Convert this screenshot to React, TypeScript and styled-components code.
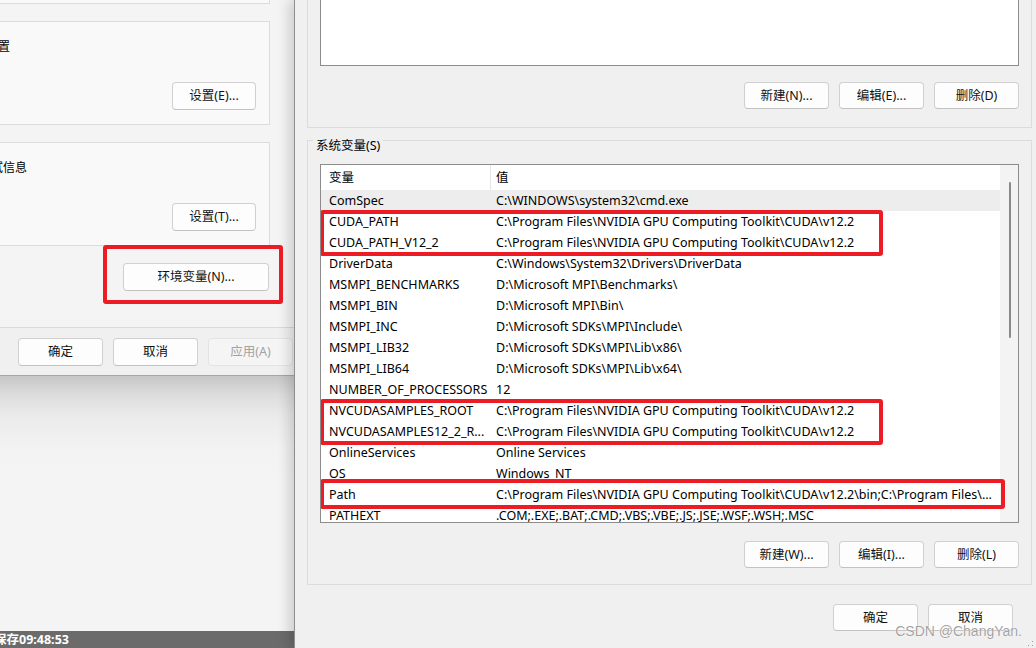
import React from "react";
import styled, { createGlobalStyle } from "styled-components";

const GlobalStyle = createGlobalStyle`
  html, body { margin: 0; padding: 0; }
  body {
    width: 1036px;
    height: 648px;
    overflow: hidden;
    background: #f4f4f4;
    font-family: "Noto Sans", "Noto Sans CJK SC", sans-serif;
    font-size: 12px;
    color: #000;
  }
  * { box-sizing: border-box; }
`;

const Screen = styled.div`
  display: flex;
  width: 1036px;
  height: 648px;
  overflow: hidden;
`;

/* ---------- left: System Properties dialog + desktop ---------- */

const LeftColumn = styled.div`
  width: 294px;
  flex: none;
  display: flex;
  flex-direction: column;
  overflow: hidden;
`;

const SysDialog = styled.div`
  height: 376px;
  flex: none;
  display: flex;
  flex-direction: column;
  overflow: hidden;
  background: #f0f0f0;
  border-bottom: 1px solid #a6a6a6;
`;

const TabPage = styled.div`
  flex: 1;
  width: 454px;
  margin-left: -160px;
  padding: 0 24px 0 12px;
  display: flex;
  flex-direction: column;
  gap: 17px;
  background: #f4f4f4;
  border-bottom: 1px solid #dadada;
`;

const Card = styled.div<{ $first?: boolean }>`
  height: 104px;
  flex: none;
  margin-top: ${(p) => (p.$first ? "-100px" : "0")};
  border: 1px solid #dcdcdc;
  background: #f9f9f9;
  padding: 0 13px 14px 13px;
  display: flex;
  flex-direction: column;
`;

const CardLegend = styled.div`
  align-self: flex-start;
  margin: -9px 0 0 -4px;
  padding: 0 3px;
  line-height: 16px;
  background: #f4f4f4;
`;

const CardDesc = styled.div<{ $shift?: number }>`
  margin-top: 10px;
  margin-left: ${(p) => p.$shift ?? 0}px;
  line-height: 16px;
  white-space: nowrap;
`;

const ButtonRow = styled.div<{ $gap?: number; $top?: number }>`
  display: flex;
  justify-content: flex-end;
  gap: ${(p) => p.$gap ?? 10}px;
  margin-top: ${(p) => (p.$top !== undefined ? `${p.$top}px` : "auto")};
`;

const Btn = styled.button<{ $w: number; $h?: number }>`
  width: ${(p) => p.$w}px;
  height: ${(p) => p.$h ?? 28}px;
  flex: none;
  padding: 0;
  border: 1px solid #d0d0d0;
  border-bottom-color: #c2c2c2;
  border-radius: 4px;
  background: #fdfdfd;
  color: #111;
  font-family: "Noto Sans", "Noto Sans CJK SC", sans-serif;
  font-size: 12.5px;
  line-height: 16px;
  white-space: nowrap;
  &:disabled {
    background: #f5f5f5;
    border-color: #e3e3e3;
    color: #a3a3a3;
  }
`;

const RedFrame = styled.div`
  align-self: flex-end;
  margin: -18px -13px 0 0;
  border: 4px solid #ed1c24;
  border-radius: 3px;
  padding: 14px 10px 9px 16px;
`;

const DialogFooter = styled.div`
  height: 47px;
  flex: none;
  width: 454px;
  margin-left: -160px;
  padding: 10px 1px 0 0;
  display: flex;
  justify-content: flex-end;
  align-items: flex-start;
  gap: 10px;
`;

const Desktop = styled.div`
  flex: 1;
  background: linear-gradient(
    to bottom,
    #c6c6c6 0px,
    #dcdcdc 18px,
    #ebebeb 40px,
    #f2f2f2 70px,
    #f4f4f4 100px
  );
`;

const StatusBar = styled.div`
  height: 17px;
  flex: none;
  background: #6b6b6b;
  color: #fff;
  font-weight: 700;
  font-size: 12.5px;
  line-height: 17px;
  white-space: nowrap;
  overflow: hidden;
`;

const StatusText = styled.span`
  display: inline-block;
  margin-left: -6px;
`;

/* ---------- right: Environment Variables dialog ---------- */

const EnvDialog = styled.div`
  flex: 1;
  position: relative;
  display: flex;
  flex-direction: column;
  padding-left: 12px;
  background: #f0f0f0;
  border-left: 1px solid #8e8e8e;
  box-shadow: -5px 0 12px rgba(0, 0, 0, 0.16);
  overflow: hidden;
`;

const Group = styled.div<{ $top: number; $pt: number; $pb: number }>`
  width: 725px;
  flex: none;
  margin-top: ${(p) => p.$top}px;
  border: 1px solid #dcdcdc;
  padding: ${(p) => p.$pt}px 12px ${(p) => p.$pb}px 12px;
  display: flex;
  flex-direction: column;
`;

const GroupLegend = styled.div`
  align-self: flex-start;
  margin: -3px 0 0 -7px;
  padding: 0 3px;
  line-height: 16px;
  font-size: 12.5px;
  background: #f0f0f0;
`;

const ListBox = styled.div<{ $h: number; $top?: number }>`
  position: relative;
  height: ${(p) => p.$h}px;
  margin-top: ${(p) => p.$top ?? 0}px;
  border: 1px solid #8c8c8c;
  background: #fff;
  display: flex;
  overflow: hidden;
`;

const TableArea = styled.div`
  flex: 1;
  display: flex;
  flex-direction: column;
  overflow: hidden;
`;

const Row = styled.div<{ $header?: boolean; $selected?: boolean }>`
  display: grid;
  grid-template-columns: 170px 1fr;
  height: ${(p) => (p.$header ? 25 : 21)}px;
  line-height: ${(p) => (p.$header ? 25 : 21)}px;
  flex: none;
  font-size: 12.5px;
  background: ${(p) => (p.$selected ? "#ededed" : "#fff")};
  color: #000;
`;

const NameCell = styled.div<{ $header?: boolean }>`
  padding-left: 8px;
  padding-right: 3px;
  white-space: nowrap;
  overflow: hidden;
  border-right: 1px solid ${(p) => (p.$header ? "#e5e5e5" : "transparent")};
`;

const ValueCell = styled.div`
  padding-left: 5px;
  white-space: nowrap;
  overflow: hidden;
`;

const ScrollTrack = styled.div`
  width: 18px;
  flex: none;
  background: #f3f3f3;
  padding: 17px 0 0 9px;
`;

const ScrollThumb = styled.div`
  width: 2px;
  height: 156px;
  border-radius: 1px;
  background: #8a8a8a;
`;

const Highlight = styled.div`
  position: absolute;
  border: 4px solid #ed1c24;
  border-radius: 3px;
  pointer-events: none;
`;

const DialogButtons = styled.div`
  width: 725px;
  flex: none;
  margin-top: 19px;
  padding-right: 19px;
  display: flex;
  justify-content: flex-end;
  gap: 10px;
`;

const Watermark = styled.div`
  position: absolute;
  right: 14px;
  bottom: 8px;
  font-family: "Liberation Sans", "Noto Sans", sans-serif;
  font-size: 14px;
  line-height: 18px;
  color: rgba(125, 125, 125, 0.72);
  text-shadow: 0 0 1px #fff, 0 0 1px #fff;
  white-space: nowrap;
`;

const Grip = styled.svg`
  position: absolute;
  right: 2px;
  bottom: 1px;
`;

type Variable = { name: string; value: string };

const systemVars: Variable[] = [
  { name: "ComSpec", value: "C:\\WINDOWS\\system32\\cmd.exe" },
  { name: "CUDA_PATH", value: "C:\\Program Files\\NVIDIA GPU Computing Toolkit\\CUDA\\v12.2" },
  { name: "CUDA_PATH_V12_2", value: "C:\\Program Files\\NVIDIA GPU Computing Toolkit\\CUDA\\v12.2" },
  { name: "DriverData", value: "C:\\Windows\\System32\\Drivers\\DriverData" },
  { name: "MSMPI_BENCHMARKS", value: "D:\\Microsoft MPI\\Benchmarks\\" },
  { name: "MSMPI_BIN", value: "D:\\Microsoft MPI\\Bin\\" },
  { name: "MSMPI_INC", value: "D:\\Microsoft SDKs\\MPI\\Include\\" },
  { name: "MSMPI_LIB32", value: "D:\\Microsoft SDKs\\MPI\\Lib\\x86\\" },
  { name: "MSMPI_LIB64", value: "D:\\Microsoft SDKs\\MPI\\Lib\\x64\\" },
  { name: "NUMBER_OF_PROCESSORS", value: "12" },
  { name: "NVCUDASAMPLES_ROOT", value: "C:\\Program Files\\NVIDIA GPU Computing Toolkit\\CUDA\\v12.2" },
  { name: "NVCUDASAMPLES12_2_R...", value: "C:\\Program Files\\NVIDIA GPU Computing Toolkit\\CUDA\\v12.2" },
  { name: "OnlineServices", value: "Online Services" },
  { name: "OS", value: "Windows_NT" },
  {
    name: "Path",
    value: "C:\\Program Files\\NVIDIA GPU Computing Toolkit\\CUDA\\v12.2\\bin;C:\\Program Files\\...",
  },
  { name: "PATHEXT", value: ".COM;.EXE;.BAT;.CMD;.VBS;.VBE;.JS;.JSE;.WSF;.WSH;.MSC" },
];

const highlights = [
  { left: -1, top: 45, width: 563, height: 46 },
  { left: -1, top: 234, width: 563, height: 46 },
  { left: -1, top: 314, width: 685, height: 30 },
];

export default function App() {
  return (
    <>
      <GlobalStyle />
      <Screen>
        <LeftColumn>
          <SysDialog>
            <TabPage>
              <Card $first>
                <CardLegend>性能</CardLegend>
                <CardDesc>视觉效果，处理器计划，内存使用，以及虚拟内存</CardDesc>
                <ButtonRow>
                  <Btn $w={84}>设置(S)...</Btn>
                </ButtonRow>
              </Card>
              <Card>
                <CardLegend>用户配置文件</CardLegend>
                <CardDesc>与登录帐户相关的桌面设置</CardDesc>
                <ButtonRow>
                  <Btn $w={84}>设置(E)...</Btn>
                </ButtonRow>
              </Card>
              <Card>
                <CardLegend>启动和故障恢复</CardLegend>
                <CardDesc $shift={-7}>系统启动、系统故障和调试信息</CardDesc>
                <ButtonRow>
                  <Btn $w={84}>设置(T)...</Btn>
                </ButtonRow>
              </Card>
              <RedFrame>
                <Btn $w={146}>环境变量(N)...</Btn>
              </RedFrame>
            </TabPage>
            <DialogFooter>
              <Btn $w={85}>确定</Btn>
              <Btn $w={85}>取消</Btn>
              <Btn $w={85} disabled>
                应用(A)
              </Btn>
            </DialogFooter>
          </SysDialog>
          <Desktop />
          <StatusBar>
            <StatusText>保存09:48:53</StatusText>
          </StatusBar>
        </LeftColumn>

        <EnvDialog>
          <Group $top={-40} $pt={14} $pb={18}>
            <ListBox $h={91} />
            <ButtonRow $top={16}>
              <Btn $w={85} $h={27}>新建(N)...</Btn>
              <Btn $w={85} $h={27}>编辑(E)...</Btn>
              <Btn $w={85} $h={27}>删除(D)</Btn>
            </ButtonRow>
          </Group>

          <Group $top={12} $pt={0} $pb={16}>
            <GroupLegend>系统变量(S)</GroupLegend>
            <ListBox $h={359} $top={10}>
              <TableArea>
                <Row $header>
                  <NameCell $header>变量</NameCell>
                  <ValueCell>值</ValueCell>
                </Row>
                {systemVars.map((v, i) => (
                  <Row key={v.name} $selected={i === 0}>
                    <NameCell>{v.name}</NameCell>
                    <ValueCell>{v.value}</ValueCell>
                  </Row>
                ))}
              </TableArea>
              <ScrollTrack>
                <ScrollThumb />
              </ScrollTrack>
              {highlights.map((h, i) => (
                <Highlight
                  key={i}
                  style={{ left: h.left, top: h.top, width: h.width, height: h.height }}
                />
              ))}
            </ListBox>
            <ButtonRow $top={18}>
              <Btn $w={85} $h={27}>新建(W)...</Btn>
              <Btn $w={85} $h={27}>编辑(I)...</Btn>
              <Btn $w={85} $h={27}>删除(L)</Btn>
            </ButtonRow>
          </Group>

          <DialogButtons>
            <Btn $w={85} $h={27}>确定</Btn>
            <Btn $w={85} $h={27}>取消</Btn>
          </DialogButtons>

          <Watermark>CSDN @ChangYan.</Watermark>
          <Grip width="6" height="6" viewBox="0 0 6 6">
            <rect x="4" y="0" width="1" height="1" fill="#9a9a9a" />
            <rect x="4" y="4" width="1" height="1" fill="#9a9a9a" />
            <rect x="0" y="4" width="1" height="1" fill="#9a9a9a" />
          </Grip>
        </EnvDialog>
      </Screen>
    </>
  );
}
